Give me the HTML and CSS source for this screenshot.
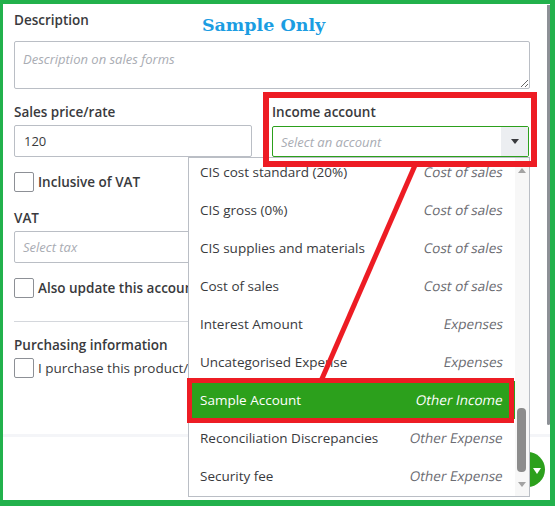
FILE: index.html
```html
<!DOCTYPE html>
<html>
<head>
<meta charset="utf-8">
<link rel="stylesheet" href="styles.css">
</head>
<body>
<div class="stage">
  <div class="frame">
    <div class="vscroll"></div>
    <div class="form">
      <div class="desc-head">
        <label class="lbl">Description</label>
        <span class="watermark">Sample Only</span>
      </div>
      <textarea class="area" placeholder="Description on sales forms"></textarea>
      <div class="two-col">
        <div class="field">
          <label class="lbl">Sales price/rate</label>
          <input class="inp" value="120">
        </div>
        <div class="field">
          <label class="lbl">Income account</label>
          <div class="select active">
            <span class="ph">Select an account</span>
            <span class="caret-btn"><span class="caret"></span></span>
          </div>
        </div>
      </div>
      <div class="check-row first"><span class="box"></span><span class="ck-lbl">Inclusive of VAT</span></div>
      <label class="lbl vat">VAT</label>
      <div class="select narrow"><span class="ph">Select tax</span></div>
      <div class="check-row clip"><span class="box"></span><span class="ck-lbl">Also update this account</span></div>
      <hr class="sep">
      <label class="lbl purch">Purchasing information</label>
      <div class="check-row tight clip"><span class="box"></span><span class="ck-lbl light">I purchase this product/service from a supplier.</span></div>
    </div>
    <div class="footer">
      <span class="save-btn"><span class="save-arrow"></span></span>
    </div>
  </div>

  <div class="dropdown">
    <ul class="list">
      <li><span>CIS cost standard (20%)</span><em>Cost of sales</em></li>
      <li><span>CIS gross (0%)</span><em>Cost of sales</em></li>
      <li><span>CIS supplies and materials</span><em>Cost of sales</em></li>
      <li><span>Cost of sales</span><em>Cost of sales</em></li>
      <li><span>Interest Amount</span><em>Expenses</em></li>
      <li><span>Uncategorised Expense</span><em>Expenses</em></li>
      <li class="hl"><span>Sample Account</span><em>Other Income</em></li>
      <li><span>Reconciliation Discrepancies</span><em>Other Expense</em></li>
      <li><span>Security fee</span><em>Other Expense</em></li>
    </ul>
    <div class="sbar">
      <span class="arr up"></span>
      <span class="thumb"></span>
      <span class="arr down"></span>
    </div>
  </div>

  <div class="anno anno-top"></div>
  <div class="anno anno-row"></div>
  <svg class="anno-line" width="555" height="506" viewBox="0 0 555 506">
    <line x1="416" y1="163" x2="321" y2="381" stroke="#ed1c24" stroke-width="5"/>
  </svg>
</div>
</body>
</html>
```

FILE: styles.css
```css
* { box-sizing: border-box; }
html, body { margin: 0; padding: 0; background: #fff; }
body { font-family: "Open Sans", "Liberation Sans", sans-serif; color: #393a3d; }

.stage { position: relative; width: 555px; height: 506px; overflow: hidden; }

.frame {
  width: 555px; height: 506px;
  border-style: solid; border-color: #22b14c;
  border-width: 4px 5px 6px 3px;
  background: #fff;
  display: flex; flex-direction: column;
  position: relative;
}

.vscroll {
  position: absolute; right: 0; top: 1px;
  width: 3px; height: 420px;
  background: #8d9096; border-radius: 0 0 2px 2px;
}

.form { padding: 6px 20px 0 11px; display: flex; flex-direction: column; align-items: flex-start; }

.lbl { display: block; font-size: 13.5px; font-weight: 600; line-height: 20px; color: #393a3d; }

.desc-head { display: flex; align-items: center; width: 100%; height: 20px; }
.watermark {
  margin-left: 113px; margin-top: 9px;
  font-family: "DejaVu Serif", serif; font-weight: bold; font-size: 17.5px;
  color: #1b9de2;
}

.area {
  display: block; margin-top: 11px;
  width: 516px; height: 48px;
  border: 1px solid #babec5; border-radius: 2px;
  padding: 8px 8px; resize: vertical;
  font-family: inherit; font-size: 13px;
}
.area::placeholder { color: #a9acb3; font-style: italic; }

.two-col { display: grid; grid-template-columns: 238px 257px; column-gap: 20px; margin-top: 13px; }
.field { display: flex; flex-direction: column; }
.inp {
  margin-top: 3px; height: 32px; width: 238px;
  border: 1px solid #babec5; border-radius: 2px;
  padding: 0 9px; font-family: inherit; font-size: 13px; color: #393a3d;
}

.select {
  margin-top: 4px; height: 31px;
  border: 1px solid #babec5; border-radius: 2px;
  display: flex; align-items: center; justify-content: space-between;
  font-size: 13px;
}
.select.active { border-color: #2ca01c; padding-left: 8px; }
.select.narrow { width: 238px; margin-top: 3px; height: 32px; padding-left: 8px; }
.ph { color: #a9acb3; font-style: italic; }
.caret-btn {
  width: 27px; height: 29px; background: #eceef1;
  display: flex; align-items: center; justify-content: center;
}
.caret {
  width: 0; height: 0;
  border-left: 4px solid transparent; border-right: 4px solid transparent;
  border-top: 5px solid #393a3d;
}

.check-row { display: flex; align-items: center; margin-top: 15px; height: 20px; white-space: nowrap; }
.check-row.tight { margin-top: 3px; }
.check-row.clip { max-width: 174px; overflow: hidden; }
.box { width: 20px; height: 20px; border: 1px solid #8d9096; border-radius: 2px; background: #fff; flex: none; }
.ck-lbl { margin-left: 4px; font-size: 13.5px; font-weight: 600; }
.ck-lbl.light { font-weight: 400; }

.lbl.vat { margin-top: 16px; }
.sep { width: 516px; margin: 23px 0 0; border: 0; border-top: 1px solid #d4d7dc; height: 0; }
.lbl.purch { margin-top: 13px; }

.footer {
  margin-top: auto; height: 66px;
  border-top: 3px solid #f4f5f8;
  position: relative;
}
.save-btn {
  position: absolute; left: 507px; top: 15px;
  width: 35px; height: 35px; border-radius: 50%;
  background: #2ca01c;
}
.save-arrow {
  position: absolute; left: 23px; top: 16px;
  width: 0; height: 0;
  border-left: 4px solid transparent; border-right: 4px solid transparent;
  border-top: 6px solid #fff;
}

.dropdown {
  position: absolute; left: 188px; top: 157px;
  width: 342px; height: 340px;
  border: 1px solid #babec5; background: #fff;
  overflow: hidden; display: flex;
}
.list { list-style: none; margin: -5px 0 0; padding: 0; flex: 1; }
.list li {
  height: 38px; display: flex; align-items: center; justify-content: space-between;
  padding: 0 12px 0 11px; font-size: 13.5px; color: #393a3d;
}
.list li em { color: #6b6c72; font-style: normal; display: inline-block; transform: skewX(-11deg); }
.list li.hl { background: #2ca01c; color: #fff; }
.list li.hl em { color: #fff; }

.sbar {
  width: 14px; background: #f7f7f7; position: relative; flex: none;
}
.arr { position: absolute; left: 3px; width: 0; height: 0; border-left: 4px solid transparent; border-right: 4px solid transparent; }
.arr.up { top: 10px; border-bottom: 5px solid #a3a3a3; }
.arr.down { top: 324px; border-top: 5px solid #a3a3a3; }
.thumb { position: absolute; left: 2px; top: 250px; width: 9px; height: 64px; background: #8c8c8c; border-radius: 4px; }

.anno { position: absolute; border: 6px solid #ed1c24; }
.anno-top { left: 263px; top: 92px; width: 274px; height: 75px; }
.anno-row { left: 187px; top: 378px; width: 327px; height: 45px; border-width: 5px; }
.anno-line { position: absolute; left: 0; top: 0; pointer-events: none; }
```
